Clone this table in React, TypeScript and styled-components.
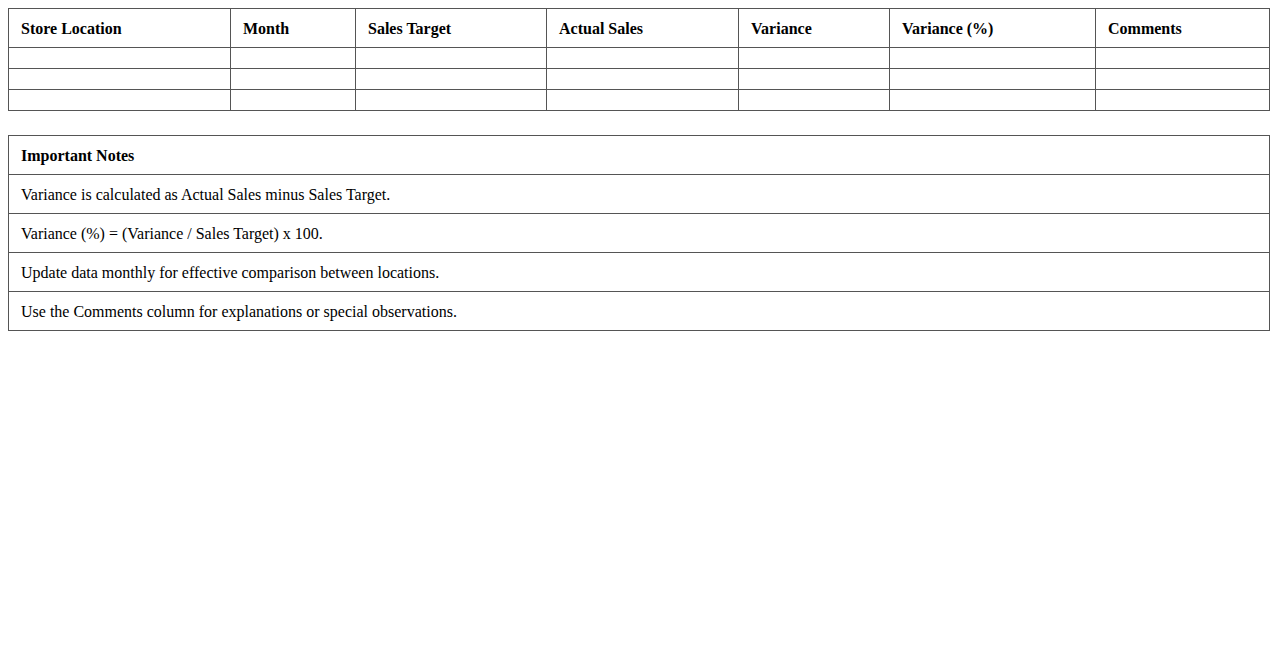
import React from "react";
import styled, { createGlobalStyle } from "styled-components";

const GlobalStyle = createGlobalStyle`
  body {
    margin: 8px;
    background: #ffffff;
    color: #000000;
    font-family: "Liberation Serif", "Times New Roman", serif;
    font-size: 16px;
  }
`;

// last column takes whatever is left
const columns = [
  { title: "Store Location", width: 222 },
  { title: "Month", width: 125 },
  { title: "Sales Target", width: 191 },
  { title: "Actual Sales", width: 192 },
  { title: "Variance", width: 151 },
  { title: "Variance (%)", width: 206 },
  { title: "Comments" },
];

const notes = [
  "Variance is calculated as Actual Sales minus Sales Target.",
  "Variance (%) = (Variance / Sales Target) x 100.",
  "Update data monthly for effective comparison between locations.",
  "Use the Comments column for explanations or special observations.",
];

const App = () => {
  return (
    <>
      <GlobalStyle />
      <SalesTable>
        <colgroup>
          {columns.map((col) => (
            <col
              key={col.title}
              style={col.width ? { width: col.width } : undefined}
            />
          ))}
        </colgroup>
        <thead>
          <tr>
            {columns.map((col) => (
              <HeadCell key={col.title}>{col.title}</HeadCell>
            ))}
          </tr>
        </thead>
        <tbody>
          {[0, 1, 2].map((row) => (
            <tr key={row}>
              {columns.map((col) => (
                <Cell key={col.title} />
              ))}
            </tr>
          ))}
        </tbody>
      </SalesTable>

      <NotesTable>
        <thead>
          <tr>
            <HeadCell>Important Notes</HeadCell>
          </tr>
        </thead>
        <tbody>
          {notes.map((note) => (
            <tr key={note}>
              <Cell>{note}</Cell>
            </tr>
          ))}
        </tbody>
      </NotesTable>
    </>
  );
};

const SalesTable = styled.table`
  width: 100%;
  border-collapse: collapse;
  table-layout: fixed;
`;

const NotesTable = styled(SalesTable)`
  margin-top: 24px;
`;

const Cell = styled.td`
  border: 1px solid #555555;
  padding: 11px 12px 9px;
  text-align: left;
  line-height: 18px;
`;

const HeadCell = styled.th`
  border: 1px solid #555555;
  padding: 11px 12px 9px;
  text-align: left;
  font-weight: bold;
  line-height: 18px;
`;

export default App;
